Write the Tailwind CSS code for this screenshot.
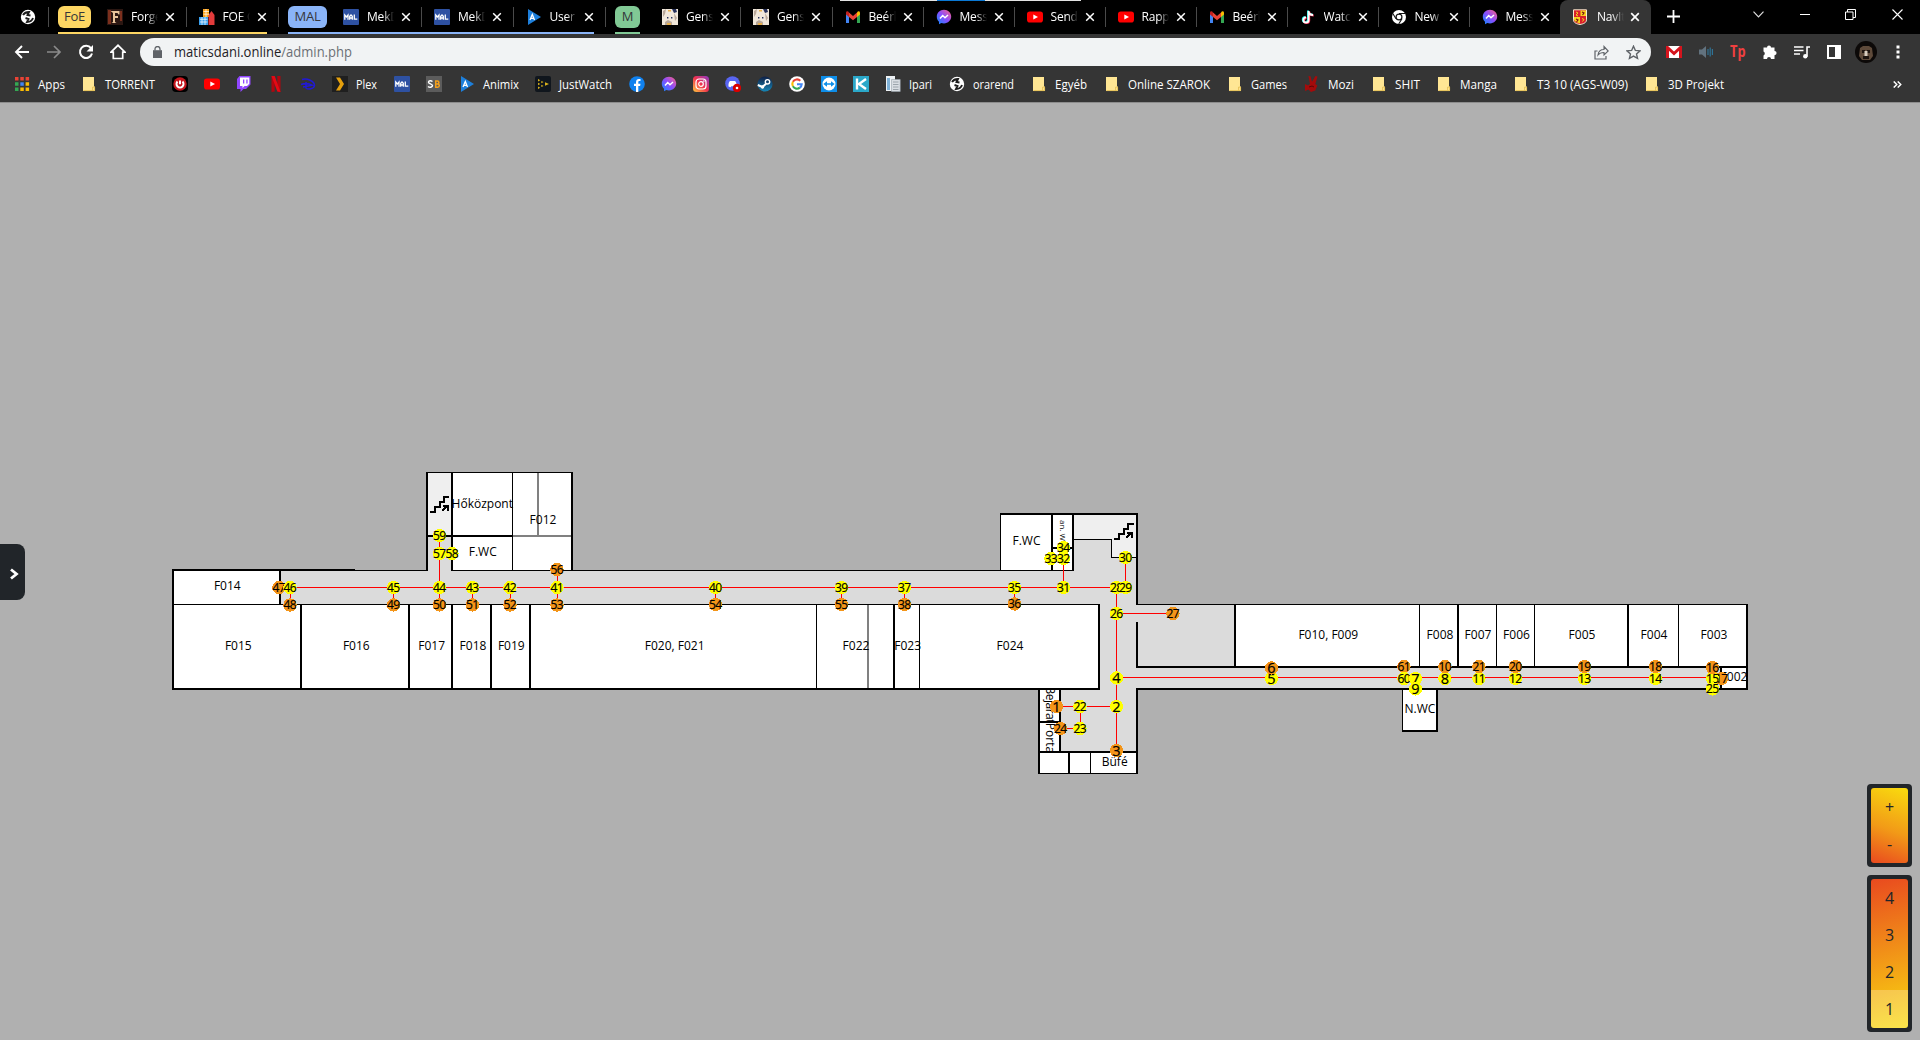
<!DOCTYPE html>
<html lang="hu">
<head>
<meta charset="utf-8">
<title>NavIt admin</title>
<script src="https://cdn.jsdelivr.net/npm/@tailwindcss/browser@4"></script>
</head>
<body class="relative w-[1920px] h-[1040px] overflow-hidden bg-[#b0b0b0] font-['Open_Sans','Noto_Sans',sans-serif] text-white flex flex-col">

<svg class="absolute size-0">
  <defs>
    <linearGradient id="gm" x1="0" y1="1" x2="1" y2="0"><stop offset="0" stop-color="#0a8cff"/><stop offset=".5" stop-color="#8a4dff"/><stop offset="1" stop-color="#ff6080"/></linearGradient>
    <linearGradient id="gi" x1="0" y1="1" x2="1" y2="0"><stop offset="0" stop-color="#ffc83d"/><stop offset=".5" stop-color="#f0324f"/><stop offset="1" stop-color="#8a3ac8"/></linearGradient>
    <linearGradient id="gs" x1="0" y1="0" x2="0" y2="1"><stop offset="0" stop-color="#101f45"/><stop offset="1" stop-color="#1687b8"/></linearGradient>
  </defs>
  <symbol id="globe" viewBox="0 0 16 16"><circle cx="8" cy="8" r="7.2" fill="#fff"/><path d="M3 6c1.500-2.500 4-3 6-3L7.500 6l3 .5M13 9c-1 3-3.500 4-6 4l1.500-3-3-1" fill="none" stroke="#1c1c1c" stroke-width="1.900"/></symbol>
  <symbol id="forge" viewBox="0 0 16 16"><path fill="#2b1712" d="M0 0h16v16H0z"/><path fill="#7b2f1d" d="M1 1h3v14H1zM13 2h2v10h-2z"/><path fill="#e8c49a" d="M3.500 2h9v3.500h-1L10.500 4H8v3h3v2H8v4l1.500 1h-5L6 13V4z"/></symbol>
  <symbol id="city" viewBox="0 0 16 16"><path fill="#f9a01b" d="M4 0h6v8H4z"/><path fill="#e33b3b" d="M9.500 6l3-4 3 4v10h-6z"/><path fill="#3aa0ee" d="M0 8h9v8H0z"/><path d="M1 10.300h7.500M1 13h7.500M4.500 2.500H10M4.500 5.200H10M3 8v8M6 8v8M7 0v8" stroke="#fff" stroke-width=".7"/></symbol>
  <symbol id="mal" viewBox="0 0 16 16"><rect width="16" height="16" rx="1" fill="#2e51a2"/><path d="M1.800 10.700V6l1.600 2L5 6v4.700M6.700 10.700V7.200L8 6l1.300 1.200v3.500M6.700 9h2.600M11.300 5.500v4.700H14.300" fill="none" stroke="#fff" stroke-width="1.300"/></symbol>
  <symbol id="ani" viewBox="0 0 16 16"><path fill="#1d7fdb" d="M2 0 15 8 2 16z"/><path d="M4 11 6.300 5.500 8.500 11M5 9.300h3" fill="none" stroke="#fff" stroke-width="1.300"/></symbol>
  <symbol id="gens" viewBox="0 0 16 16"><path fill="#f1e7da" d="M0 0h16v16H0z"/><path fill="#b9a89a" d="M1 2 4 0 3 5 1 8zM12 4l3 5-2 3zM3 13l3-2 4 2v3H3z"/><path fill="#28325c" d="M10 0h4l1 3-3 1zM5 8h1.400v1.400H5zM9 8h1.400v1.400H9z"/><path fill="#e8b04c" d="M5 14h4v2H5zM6 1h3v1.500H6z"/></symbol>
  <symbol id="gmail" viewBox="0 0 16 16"><path fill="#4285f4" d="M1 4v10h3V7z"/><path fill="#34a853" d="M12 7v7h3V4z"/><path fill="#ea4335" d="M4 3.500 8 7l4-3.500V8l-4 3.200L4 8z"/><path fill="#c5221f" d="M1 4c0-2 2-2.200 3-.5V8L1 5.500z"/><path fill="#fbbc04" d="M15 4c0-2-2-2.200-3-.5V8l3-2.500z"/></symbol>
  <symbol id="msg" viewBox="0 0 16 16"><path fill="url(#gm)" d="M8 .8C3.900.8.8 3.800.8 7.700c0 2.100.8 3.800 2.200 5v2.500l2.300-1.200c.8.3 1.700.4 2.700.4 4.100 0 7.200-3 7.200-6.800S12.100.8 8 .8z"/><path d="M4 9.500 6.700 6.500 9 8.700 12 6" fill="none" stroke="#fff" stroke-width="1.500"/></symbol>
  <symbol id="yt" viewBox="0 0 16 16"><rect y="2.500" width="16" height="11" rx="2.800" fill="#f00"/><path fill="#fff" d="M6.300 5.500 11 8l-4.700 2.500z"/></symbol>
  <symbol id="tik" viewBox="0 0 16 16"><path d="M8 1.500v9a2.600 2.600 0 1 1-2.600-2.600M8 2c.3 2 2 3.500 4.500 3.500" fill="none" stroke="#25f4ee" stroke-width="2"/><path d="M9.200 2.500v9A2.600 2.600 0 1 1 6.600 8.900M9.200 3c.3 2 2 3.500 4.500 3.500" fill="none" stroke="#fe2c55" stroke-width="2"/><path d="M8.600 2v9A2.600 2.600 0 1 1 6 8.400M8.600 2.500c.3 2 2 3.500 4.500 3.500" fill="none" stroke="#fff" stroke-width="1.800"/></symbol>
  <symbol id="chrome" viewBox="0 0 16 16"><circle cx="8" cy="8" r="7" fill="#fff"/><circle cx="8" cy="8" r="3.500" fill="#111"/><circle cx="8" cy="8" r="2.300" fill="#fff"/><path d="M8 4.500h6.500M5 9.800 1.800 4.500M11 9.800 7.700 15" stroke="#111" stroke-width="1.100"/></symbol>
  <symbol id="crest" viewBox="0 0 16 16"><path fill="#d9202a" stroke="#f4ead0" d="M1.500.8h13v10C14.500 14 11 15 8 15.500 5 15 1.500 14 1.500 10.800z"/><path fill="#f6d21f" d="M8.500 1.500H14V7H8.500zM2 8h6v6.500L4 13l-2-2z"/><path d="M4 3l2 1-2 2 2 1M10 3l2 1-1.500 2" fill="none" stroke="#f6d21f" stroke-width="1"/><path d="M10 3l2 1-1.500 2M4 10l2 1-1.500 2" fill="none" stroke="#7b1414" stroke-width="1.200"/><path d="M10 9.500l2 1-1.500 2" fill="none" stroke="#f6d21f"/></symbol>
  <symbol id="apps" viewBox="0 0 16 16"><path fill="#ea4335" d="M1 1h3.500v3.500H1zM6.300 1h3.500v3.500H6.300zM11.600 1h3.500v3.500h-3.500z"/><path fill="#34a853" d="M1 6.300h3.500v3.500H1zM1 11.600h3.500v3.500H1z"/><path fill="#4285f4" d="M6.300 6.300h3.500v3.500H6.300z"/><path fill="#fbbc04" d="M11.600 6.300h3.500v3.500h-3.500zM6.300 11.600h3.500v3.500H6.300zM11.600 11.600h3.500v3.500h-3.500z"/></symbol>
  <symbol id="folder" viewBox="0 0 16 16"><path fill="#ffe694" d="M2 1h11v9l1 1v4H2z"/><path fill="none" stroke="#e0b94a" stroke-width=".8" d="M2.400 14.600h11.200v-3.500h-2v3.200"/></symbol>
  <symbol id="ncore" viewBox="0 0 16 16"><rect width="16" height="16" rx="4" fill="#000"/><circle cx="8" cy="8" r="6.700" fill="#c5161d"/><path d="M5.500 5.500A3.500 3.500 0 1 0 10.500 5.500M8 4.500v3.800" fill="none" stroke="#fff" stroke-width="2"/></symbol>
  <symbol id="twitch" viewBox="0 0 16 16"><path fill="#9146ff" d="M3.500 0 1 3v10h3.500v3l3-3H10l4.500-4.500V0z"/><path fill="#fff" d="M4 1.500h9.300v6.300L11 10H8.500l-2 2v-2H4z"/><path fill="#9146ff" d="M7 3.500h1.300v4H7zM10.300 3.500h1.300v4h-1.300z"/></symbol>
  <symbol id="netflix" viewBox="0 0 16 16"><path fill="#b1060f" d="M3.500 0h3.200v15.500l-3.200.5zM9.300 0h3.200v16l-3.200-.5z"/><path fill="#e50914" d="M3.500 0h3.200l5.800 16-3.200-.5z"/></symbol>
  <symbol id="disney" viewBox="0 0 16 16"><path d="M2 3.500C7 2 14.500 5 14.500 9.500 14 13 8 14 6 12V6M1 8.500C4 7.500 9 7.500 12 9.200L3 11" fill="none" stroke="#2119d6" stroke-width="1.500"/></symbol>
  <symbol id="plex" viewBox="0 0 16 16"><path fill="#1f1f1f" d="M0 0h16v16H0z"/><path fill="#e5a00d" d="M4 1.500h4L12 8l-4 6.500H4L8 8z"/></symbol>
  <symbol id="sb" viewBox="0 0 16 16"><path fill="#5c5c5c" d="M0 0h16v16H0z"/><path d="M6.500 5.500C5 4.300 2.500 4.500 2.500 6.200s4 1.600 4 3.400S3.500 11.700 2 10.500" fill="none" stroke="#fff" stroke-width="1.500"/><path d="M9.700 5v6.200h2a1.600 1.600 0 0 0 0-3.200h-2 1.700a1.500 1.500 0 0 0 0-3z" fill="none" stroke="#f5a01b" stroke-width="1.500"/></symbol>
  <symbol id="jw" viewBox="0 0 16 16"><rect width="16" height="16" rx="2" fill="#10161d"/><path fill="#d9b21c" d="M3 3l2.300 1.200L3 5.400zM3 6.800 5.300 8 3 9.200zM3 10.500l2.300 1.200L3 13zM6.300 4.900l2.300 1.200-2.300 1.200zM6.300 8.700l2.300 1.200-2.300 1.200zM10 6.200 14 8l-4 1.800z"/></symbol>
  <symbol id="fb" viewBox="0 0 16 16"><circle cx="8" cy="8" r="7.800" fill="#1081ee"/><path fill="#fff" d="M7 16V10H5V7.800h2V6.200C7 4 8.200 3 10 3l1.500.1v2h-1c-.9 0-1.200.5-1.200 1.200v1.500h2.200L11.100 10H9.300v6z"/></symbol>
  <symbol id="insta" viewBox="0 0 16 16"><rect width="16" height="16" rx="3.500" fill="url(#gi)"/><rect x="3" y="3" width="10" height="10" rx="3" fill="none" stroke="#fff" stroke-width="1.200"/><circle cx="8" cy="8" r="2.300" fill="none" stroke="#fff" stroke-width="1.200"/><circle cx="10.900" cy="5.100" r=".8" fill="#fff"/></symbol>
  <symbol id="disc" viewBox="0 0 16 16"><circle cx="7.500" cy="7.500" r="7.300" fill="#5865f2"/><path fill="#fff" d="M3.500 10.500C3.200 8 4 5.500 5 5h5c1 .5 2 3 1.700 5.500l-2 .8-.7-1H6.300l-.7 1z"/><circle cx="12" cy="12" r="4.200" fill="#d90000"/><circle cx="12" cy="12" r="1.300" fill="#fff"/></symbol>
  <symbol id="steam" viewBox="0 0 16 16"><circle cx="8" cy="8" r="7.600" fill="url(#gs)"/><circle cx="10.500" cy="5.800" r="2.200" fill="none" stroke="#fff" stroke-width="1.400"/><path d="M.8 9 5.500 11 9 7.800" fill="none" stroke="#fff" stroke-width="2"/><circle cx="5.500" cy="11" r="1.700" fill="#fff"/></symbol>
  <symbol id="google" viewBox="0 0 16 16"><circle cx="8" cy="8" r="7.800" fill="#fff"/><g fill="none" stroke-width="2.100"><path stroke="#ea4335" d="M3.900 5.800A4.700 4.700 0 0 1 11.300 4.700"/><path stroke="#fbbc04" d="M3.900 5.800a4.700 4.700 0 0 0 0 4.500"/><path stroke="#34a853" d="M3.900 10.300a4.700 4.700 0 0 0 7 1.400"/><path stroke="#4285f4" d="M10.900 11.700A4.700 4.700 0 0 0 12.700 8.300H8"/></g></symbol>
  <symbol id="tv" viewBox="0 0 16 16"><path fill="#0e8ee9" d="M0 0h16v16H0z"/><circle cx="8" cy="8" r="6.500" fill="#fff"/><path fill="#0e8ee9" d="M2.300 8 6 5.300v1.900h4V5.300L13.700 8 10 10.700V8.800H6v1.900z"/></symbol>
  <symbol id="kk" viewBox="0 0 16 16"><path fill="#2ba8c9" d="M0 0h16v16H0z"/><path d="M4 2.500v11M13 3 6 8l7 5" fill="none" stroke="#fff" stroke-width="2.400"/></symbol>
  <symbol id="ipari" viewBox="0 0 16 16"><path fill="#eef2f5" d="M1 0h9v15H1z"/><path fill="#7fb2d8" d="M2 2h3v12H2z"/><path fill="#d9dee3" stroke="#9aa4ad" stroke-width=".6" d="M6.500 3.500h8.700v12H6.500z"/><path d="M8 6h5.500M8 8.500h5.500M8 11h5.500M8 13.500h5.500" stroke="#8c959d" stroke-width=".8"/></symbol>
  <symbol id="hand" viewBox="0 0 16 16"><path fill="#a30b0b" d="M4.500 0l2 .3 1.500 5.500L11.500 0l2 .6L11.300 8l2 1.500-2 5L7 16l-2.500-2.500L1 15V8l3 1.500L6 8z"/><path d="M5 11l3-1 2 1" stroke="#5c0505" fill="none"/></symbol>
</svg>

<!-- Tab strip -->
<header class="relative h-[34px] shrink-0 bg-black flex items-start">
  <div id="tabs" class="flex h-[34px] w-[1560px] shrink-0 items-center"></div>
  <div class="relative flex h-[34px] w-[91px] shrink-0 items-center rounded-t-lg bg-[#353535] pr-2.5 pl-3">
    <svg class="size-4 shrink-0"><use href="#crest"/></svg>
    <span class="ml-[9px] w-[27px] overflow-hidden whitespace-nowrap text-xs leading-4 tracking-[-0.2px] [mask-image:linear-gradient(to_right,black_55%,transparent)]">NavIt</span>
    <svg class="ml-[6px] size-2.5 shrink-0" viewBox="0 0 10 10"><path d="M1.200 1.200l7.600 7.600M8.800 1.200 1.200 8.800" stroke="#fff" stroke-width="1.700"/></svg>
  </div>
  <svg class="mt-[10px] ml-4 size-[13px]" viewBox="0 0 13 13"><path d="M6.500 0v13M0 6.500h13" stroke="#fff" stroke-width="1.800"/></svg>
  <svg class="mt-[11px] ml-[73px] h-[7px] w-[11px]" viewBox="0 0 11 7"><path d="M.5.700 5.500 5.800 10.500.700" fill="none" stroke="#ddd" stroke-width="1.200"/></svg>
  <svg class="mt-[14px] ml-[36px] h-[2px] w-[10px]" viewBox="0 0 10 2"><path fill="#fff" d="M0 0h10v1H0z"/></svg>
  <svg class="mt-[9px] ml-[35px] size-[11px]" viewBox="0 0 11 11"><path d="M.5 3h7.500v7.500H.5zM2.500 3V.5h8v8H8" fill="none" stroke="#fff"/></svg>
  <svg class="mt-[9px] ml-[36px] size-[11px]" viewBox="0 0 11 11"><path d="M.5.5l10 10M10.500.5l-10 10" fill="none" stroke="#fff" stroke-width="1.100"/></svg>
  <div class="absolute top-0 left-[840px] flex h-px w-[241px] justify-center bg-[#e4e4e4]"><div class="w-12 bg-[#0a78d4]"></div></div>
  <div class="absolute top-8 left-[58px] h-0.5 w-[209px] bg-[#fdd663]"></div>
  <div class="absolute top-8 left-[288px] h-0.5 w-[306px] bg-[#8ab4f8]"></div>
  <div class="absolute top-8 left-[615px] h-0.5 w-[25px] bg-[#81c995]"></div>
</header>

<!-- Toolbar -->
<div class="flex h-[36px] shrink-0 items-center bg-[#353535] pl-[14px]">
  <svg class="size-4" viewBox="0 0 16 16"><path d="M15 8H2.500M8 2 2 8l6 6" fill="none" stroke="#fff" stroke-width="1.900"/></svg>
  <svg class="ml-4 size-4" viewBox="0 0 16 16"><path d="M1 8h12.500M8 2l6 6-6 6" fill="none" stroke="#8b8b8b" stroke-width="1.700"/></svg>
  <svg class="ml-4 size-4" viewBox="0 0 16 16"><path d="M13 4.200A6.100 6.100 0 1 0 14 9.500" fill="none" stroke="#fff" stroke-width="2"/><path fill="#fff" d="M15 1v6.500H8.500z"/></svg>
  <svg class="ml-4 size-4" viewBox="0 0 16 16"><path d="M1 8.200 8 1.300l7 6.900h-2.300V14.500H3.300V8.200z" fill="none" stroke="#fff" stroke-width="1.700"/></svg>
  <div class="ml-[14px] flex h-[28px] w-[1511px] items-center rounded-full bg-[#f1f3f4] pr-2.5 pl-[13px]">
    <svg class="h-3 w-[9px]" viewBox="0 0 9 12"><path fill="#5f6368" d="M0 4.200h9V12H0z"/><path d="M2 4.500V3a2.500 2.500 0 0 1 5 0v1.500" fill="none" stroke="#5f6368" stroke-width="1.300"/></svg>
    <svg class="ml-[12px] h-5 w-[190px] text-[14px]"><text x="0" y="15" textLength="178" lengthAdjust="spacingAndGlyphs" fill="#1f2124">maticsdani.online<tspan fill="#6b6f74">/admin.php</tspan></text></svg>
    <span class="grow"></span>
    <svg class="mr-[17px] size-[15px]" viewBox="0 0 15 15"><path d="M3.500 6H1v8h11v-3" fill="none" stroke="#5f6368" stroke-width="1.200"/><path d="M4 10c.5-4 3-5.500 6-5.500V1.500L14.200 6 10 10V7.500C7.500 7.500 5.500 8 4 10z" fill="none" stroke="#5f6368" stroke-width="1.100"/></svg>
    <svg class="size-[15px]" viewBox="0 0 16 16"><path d="M8 1.300l2 4.500 4.900.500-3.700 3.200 1.100 4.800L8 11.800l-4.300 2.500 1.100-4.800L1.100 6.300 6 5.800z" fill="none" stroke="#5f6368" stroke-width="1.500"/></svg>
  </div>
  <svg class="ml-[15px] h-3 w-4" viewBox="0 0 16 12"><path fill="#fff" d="M0 0h16v12H0z"/><path d="M1.500 12V1.500L8 7.500l6.500-6V12" fill="none" stroke="#d5141d" stroke-width="3"/></svg>
  <svg class="ml-4 size-4" viewBox="0 0 16 16"><path fill="#62727e" d="M1 5.500h3L8 2v12l-4-3.500H1z"/><path d="M10 5v6M12.200 3.500v9M14.400 5v6" stroke="#2f7396" stroke-width="1.200"/></svg>
  <svg class="ml-4 h-5 w-4 text-[16px] font-bold"><text x="0" y="15" textLength="15.500" lengthAdjust="spacingAndGlyphs" fill="#f04040">Tp</text></svg>
  <svg class="ml-4 size-4" viewBox="0 0 16 16"><path fill="#fff" d="M5 3.500a2 2 0 0 1 4 0h3.500V7a2.100 2.100 0 0 1 0 4.200V15H9a2 2 0 0 0-4 0H1.500v-3.500a2.200 2.200 0 0 0 0-4V3.500z"/></svg>
  <svg class="ml-4 size-4" viewBox="0 0 16 16"><path d="M0 3h9.500M0 6.500h9.500M0 10h6M13 12.500V3h3" fill="none" stroke="#fff" stroke-width="1.600"/><circle cx="11.300" cy="12.300" r="2.200" fill="#fff"/></svg>
  <svg class="ml-[17px] size-[14px]" viewBox="0 0 14 14"><path d="M1 1h12v12H1z" fill="none" stroke="#fff" stroke-width="2"/><path fill="#fff" d="M8 1h5v12H8z"/></svg>
  <svg class="ml-[14px] size-[22px]" viewBox="0 0 22 22"><circle cx="11" cy="11" r="11" fill="#0c0908"/><path fill="#5e4a3a" d="M5 7l3-2h6l3 2 1 8-3 4H7l-3-4z"/><path fill="#1d140f" d="M7 9h3v3H7zM12 9h3v3h-3zM8 15h6v3H8z"/><path fill="#d8cdbf" d="M9.500 10h3v5h-3z"/></svg>
  <svg class="ml-[19px] h-[14px] w-1" viewBox="0 0 4 14"><path fill="#fff" d="M.5.500h3v3h-3zM.5 5.500h3v3h-3zM.5 10.500h3v3h-3z"/></svg>
</div>

<!-- Bookmarks bar -->
<nav class="flex h-8 shrink-0 items-center bg-[#353535] pb-1">
  <div id="marks" class="flex h-full w-[1890px] shrink-0 items-center"></div>
  <svg class="ml-[3px] h-[7px] w-[9px]" viewBox="0 0 9 7"><path d="M.7.400 3.800 3.500.7 6.600M4.700.400 7.800 3.500 4.700 6.600" fill="none" stroke="#fff" stroke-width="1.400"/></svg>
</nav>

<!-- Floor plan -->
<main class="relative h-[938px] w-full shrink-0 border-t border-[#8d8d8d] text-[#212529]">
  <svg id="plan" class="absolute -top-px left-0 h-[938px] w-[1920px]" viewBox="0 102 1920 938" shape-rendering="crispEdges">
    <path fill="#dbdbdb" d="M280 570H1137V604H1235V689H1137V752H1060V689H1099V604H280zM428 536h24v35h-24z"/>
    <path fill="#dbdbdb" d="M1073 539h64v40h-64z"/>
    <path fill="#efefef" d="M428 473h24v63h-24zM1074 515h63v43h-25v-18h-38z"/>
    <path fill="#dbdbdb" d="M1235 667h486v22h-486z"/>
    <path fill="#fff" d="M173 570h107v34H173zM173 604h926v85H173zM452 473h120v97H452zM1001 514h72v56h-72zM1235 604h512v63h-512zM1721 667h26v22h-26zM1403 690h34v41h-34zM1039 689h21v63h-21zM1039 752h98v21h-98z"/>
    <g fill="#808080"><path d="M537 473h2v63h-2zM513 535h59v2h-59zM867 604h2v85h-2z"/></g>
    <g fill="#000">
      <path d="M427 472h146v1H427zM426 472h2v99h-2zM451 472h2v99h-2zM571 472h2v99h-2zM512 473h1v98h-1zM427 535h86v2h-86z"/>
      <path d="M172 569h183v2H172zM355 570h73v1h-73zM452 570h622v1H452zM172 569h2v121h-2zM279 570h2v35h-2zM172 604h928v1H172z"/>
      <path d="M172 688h928v2H172zM300 604h2v85h-2zM408 604h2v85h-2zM451 604h2v85h-2zM490 604h2v85h-2zM529 604h2v85h-2zM816 604h1v85h-1zM893 604h2v85h-2zM919 604h1v85h-1zM1098 604h2v86h-2z"/>
      <path d="M1000 513h138v2H1000zM1000 513h1v58h-1zM1051 513h2v58h-2zM1072 513h2v58h-2zM1052 547h21v2h-21zM1136 513h2v92h-2zM1074 539h38v1h-38zM1111 539h1v19h-1zM1111 557h26v1h-26z"/>
      <path d="M1136 604h612v1h-612zM1136 622h2v46h-2zM1136 666h612v2h-612zM1234 604h2v63h-2zM1419 604h1v63h-1zM1457 604h2v63h-2zM1496 604h1v63h-1zM1534 604h1v63h-1zM1627 604h2v63h-2zM1678 604h1v63h-1zM1746 604h2v86h-2zM1720 667h2v22h-2zM1136 688h612v2h-612z"/>
      <path d="M1402 689h1v42h-1zM1436 689h2v43h-2zM1402 730h36v2h-36zM1038 689h2v85h-2zM1038 721h22v2h-22zM1059 689h2v63h-2zM1038 751h100v2h-100zM1068 752h2v21h-2zM1090 752h1v21h-1zM1136 688h2v86h-2zM1038 773h100v1h-100z"/>
    </g>
    <g fill="none" stroke="#000" stroke-width="2">
      <path d="M430 512h5v-5h5v-5h4v-5h5M442 511l5-5M443 506h4.500v5"/>
      <path d="M1114 539h5v-5h5v-5h4v-5h6M1126 538l5-5M1127 533h4.500v5"/>
    </g>
    <path stroke="#f00" fill="none" d="M290 587.500H1126M439.500 535V605M290.500 587V605M393.500 587V605M472.500 587V605M510.500 587V605M557.500 569V605M715.500 587V605M841.500 587V605M904.500 587V605M1014.500 587V605M1063.500 547V587M1125.500 557V587M1116.500 587V751M1116 613.500H1173M1057 706.500H1116M1080.500 706V728M1060 728.500H1080M1116 677.500H1721"/>
    <g id="labels" font-size="12" fill="#000" text-anchor="middle"></g>
    <clipPath id="c1"><path d="M1040 690h20v31h-20z"/></clipPath><clipPath id="c2"><path d="M1040 723h19v28h-19z"/></clipPath><clipPath id="c3"><path d="M1053 519h19v28h-19z"/></clipPath>
    <g font-size="12" fill="#000" text-anchor="middle">
      <g clip-path="url(#c1)"><text transform="translate(1046 705) rotate(90)" textLength="37">Bejárat</text></g>
      <g clip-path="url(#c2)"><text transform="translate(1046 738) rotate(90)">Porta</text></g>
      <g clip-path="url(#c3)"><text font-size="8" transform="translate(1060 533) rotate(90)">an. WC</text></g>
    </g>
    <g id="nodes" fill="#000" text-anchor="middle"></g>
  </svg>

  <button class="absolute top-[441px] left-0 flex h-14 w-[25px] items-center rounded-r-lg bg-[#212529] pl-[9px]">
    <svg class="mt-[3px] h-3 w-[10px]" viewBox="0 0 10 12"><path d="M2 1.500 7.500 6 2 10.500" fill="none" stroke="#fff" stroke-width="2.800"/></svg>
  </button>

  <div class="absolute top-[681px] left-[1867px] flex w-[45px] flex-col gap-2 text-center">
    <div class="rounded bg-[#212529] p-1">
      <div class="flex h-[75px] flex-col rounded-[3px] bg-[linear-gradient(200deg,#f9dc0e,#f29a17_55%,#e94a1f)] text-base">
        <span class="h-[37px] leading-[39px]">+</span><span class="h-[38px] leading-[38px]">-</span>
      </div>
    </div>
    <div class="rounded bg-[#212529] p-1">
      <div class="flex h-[149px] flex-col overflow-hidden rounded-[3px] bg-[linear-gradient(165deg,#e94a1f,#f29a17_55%,#f9dc0e)] text-base">
        <span class="h-[37px] leading-[38px]">4</span><span class="h-[37px] leading-[38px]">3</span><span class="h-[37px] leading-[38px]">2</span><span class="h-[38px] bg-white/25 leading-[38px]">1</span>
      </div>
    </div>
  </div>
</main>

<script>
// [favicon anchor x, icon, title]
const tabs = [
  [95,'forge','Forge of'],[186.5,'city','FOE Guide'],[331,'mal','MekDeX'],[422,'mal','MekDeX'],[513.5,'ani','User'],
  [650,'gens','Genshin'],[741,'gens','Genshin'],[832.5,'gmail','Beérkező'],[923.5,'msg','Messenger'],[1014.5,'yt','Send me'],
  [1105.500,'yt','Rapper'],[1196.500,'gmail','Beérkező'],[1287.500,'tik','Watch'],[1378.500,'chrome','New Tab'],[1469.500,'msg','Messenger']];
const groups = { 0:[58,33,'FoE','bg-[#fdd663]'], 2:[288,39,'MAL','bg-[#8ab4f8]'], 5:[615,25,'M','bg-[#81c995]'] };
const bar = '<i class="h-5 w-px shrink-0 bg-[#4a4a4a]"></i>';
let x = 48, h = `<span class="flex w-12 shrink-0 justify-center pl-2 pr-0"><svg class="size-4"><use href="#globe"/></svg></span>`;
tabs.forEach(([sx, icon, title], i) => {
  const g = groups[i];
  if (g) {
    const w = g[0] + g[1] - x;
    h += `<span class="flex shrink-0 items-center justify-between" style="width:${w}px">${bar}<b class="flex h-[22px] items-center justify-center rounded-md ${g[3]} text-[13px] font-normal tracking-[-0.3px] text-[#35363a]" style="width:${g[1]}px">${g[2]}</b></span>`;
    x += w;
  }
  const next = groups[i + 1] ? (groups[i + 1][0] - 10.5) : (tabs[i + 1] ? tabs[i + 1][0] : 1560);
  h += `<span class="flex h-full shrink-0 items-center" style="width:${next - x}px;padding-left:${sx + 12 - x - (g ? 0 : 1)}px">` +
    (g ? '' : `<i class="-ml-[12px] mr-[12px] h-5 w-px shrink-0 bg-[#4a4a4a]"></i>`) +
    `<svg class="size-4 shrink-0"><use href="#${icon}"/></svg><span class="ml-2 w-[27px] shrink-0 overflow-hidden whitespace-nowrap text-xs tracking-[-0.2px] [mask-image:linear-gradient(to_right,black_60%,transparent)]">${title}</span>` +
    `<svg class="ml-[7px] size-2.5 shrink-0" viewBox="0 0 10 10"><path d="M1.200 1.200l7.600 7.600M8.800 1.200 1.200 8.800" stroke="#fff" stroke-width="1.500"/></svg></span>`;
  x = next;
});
document.getElementById('tabs').innerHTML = h;

// [icon x, icon, label, label width]
const marks = [[13.5,'apps','Apps',27],[81,'folder','TORRENT',50],[172,'ncore'],[204,'yt'],[236,'twitch'],[268,'netflix'],[300,'disney'],
  [332,'plex','Plex',21],[394,'mal'],[426,'sb'],[459,'ani','Animix',36],[535,'jw','JustWatch',53],[629,'fb'],[661,'msg'],[693,'insta'],[725,'disc'],
  [757,'steam'],[789,'google'],[821,'tv'],[853,'kk'],[885,'ipari','Ipari',23],[949,'globe','orarend',41],[1031,'folder','Egyéb',32],
  [1104,'folder','Online SZAROK',82],[1227,'folder','Games',36],[1304,'hand','Mozi',26],[1371,'folder','SHIT',25],[1436,'folder','Manga',37],
  [1513,'folder','T3 10 (AGS-W09)',91],[1644,'folder','3D Projekt',56]];
document.getElementById('marks').innerHTML = marks.map(([mx, icon, label, lw], i) => {
  const end = marks[i + 1] ? marks[i + 1][0] : 1890;
  return `<a class="flex shrink-0 items-center" style="width:${end - mx + (i ? 0 : 0)}px;${i ? '' : 'margin-left:13.5px'}"><svg class="size-4 shrink-0"><use href="#${icon}"/></svg>${label ? `<svg class="ml-2 h-4 shrink-0 overflow-visible text-[12px]" style="width:${lw}px"><text x="0" y="12.500" fill="#fff" textLength="${lw}" lengthAdjust="spacingAndGlyphs">${label}</text></svg>` : ''}</a>`;
}).join('');

const labels = [['F014',227.3,590],['F015',238.300,650],['F016',356.300,650],['F017',431.700,650],['F018',473,650],['F019',511.300,650],['F020, F021',674.700,650],
  ['F022',856,650],['F023',907.700,650],['F024',1010,650],['F010, F009',1328.300,639],['F008',1440,639],['F007',1478,639],['F006',1516.500,639],['F005',1582,639],
  ['F004',1654,639],['F003',1714,639],['F002',1734,681],['N.WC',1420,713],['Büfé',1114.700,766],['Hőközpont',482.300,508],['F012',543,524],['F.WC',482.700,556],['F.WC',1026.500,545]];
document.getElementById('labels').innerHTML = labels.map(([t, lx, y]) => `<text x="${lx}" y="${y}">${t}</text>`).join('');

// [id, x, y, is door]
const nodes = [[59,439.500,535.500],[58,452,553.500],[57,439.500,553.500],[47,279,587.500,1],[46,290,587.500],[48,290,605,1],[45,393.500,587.500],[49,393.500,605,1],
  [44,439.500,587.500],[50,439.500,605,1],[43,472.500,587.500],[51,472.500,605,1],[42,510,587.500],[52,510,605,1],[41,557,587.500],[53,557,605,1],[56,557,569.500,1],
  [40,715.500,587.500],[54,715.500,604.500,1],[39,841.500,587.500],[55,841.500,604.500,1],[37,904.500,587.500],[38,904.500,604.500,1],[35,1014.500,587.500],[36,1014.500,604,1],
  [31,1063.500,587.500],[34,1063.500,547.500],[33,1051,558.500],[32,1063.500,558.500],[28,1116.500,587.500],[29,1125.500,587.500],[30,1125.500,557.500],[26,1116.500,613.500],[27,1173,613.500,1],
  [4,1116.500,678],[2,1116.500,706.500],[3,1116.500,750.500,1],[22,1080,706.500],[1,1056.500,706.500,1],[24,1060.500,728.500,1],[23,1080,728.500],
  [5,1271.500,678.500],[6,1271.500,668,1],[61,1404,666.500,1],[60,1404,678.500],[7,1415.500,678.500],[9,1415.500,689],[8,1445,678.500],[10,1445,666.500,1],[11,1479,678.500],[21,1479,666.500,1],
  [12,1515.500,678.500],[20,1515.500,666.500,1],[13,1584.500,678.500],[19,1584.500,666.500,1],[14,1655.500,678.500],[18,1655.500,666.500,1],[17,1721.500,678.500,1],[15,1712.500,678.500],[16,1712.500,667.500,1],[25,1712.500,689]];
document.getElementById('nodes').innerHTML = nodes.map(([n, nx, ny, door]) =>
  `<circle cx="${nx}" cy="${ny}" r="6.700" fill="${door ? '#f39519' : '#ffff00'}"/><text x="${nx}" y="${ny + (n < 10 ? 5 : 4.300)}" stroke="#000" stroke-width=".2" font-size="${n < 10 ? 14.5 : 12}"${n < 10 ? '' : ' textLength="13"'}>${n}</text>`).join('');
</script>
</body>
</html>
